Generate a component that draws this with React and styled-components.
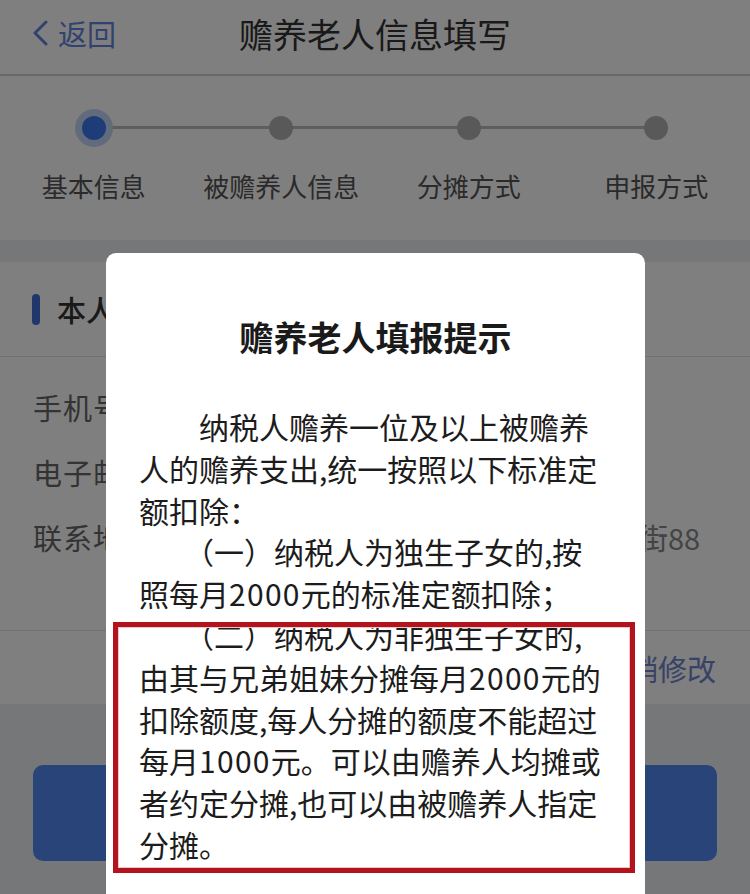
import React from "react";
import styled, { createGlobalStyle } from "styled-components";

const steps = ["基本信息", "被赡养人信息", "分摊方式", "申报方式"];

const rows = [
    { label: "手机号码", value: "138****6688" },
    { label: "电子邮箱", value: "zhang@163.com" },
    { label: "联系地址", value: "北京市海淀区中关村大街科学院南街88" },
];

// each entry is one printed line of the notice
const noticeLines = [
    "　　纳税人赡养一位及以上被赡养",
    "人的赡养支出,统一按照以下标准定",
    "额扣除：",
    "　　（一）纳税人为独生子女的,按",
    ["照每月", "2000", "元的标准定额扣除；"],
    "　　（二）纳税人为非独生子女的,",
    ["由其与兄弟姐妹分摊每月", "2000", "元的"],
    "扣除额度,每人分摊的额度不能超过",
    ["每月", "1000", "元。可以由赡养人均摊或"],
    "者约定分摊,也可以由被赡养人指定",
    "分摊。",
];

const App = () => {
    return (
        <Page>
            <GlobalStyle />
            <Header>
                <BackButton>
                    <svg width="20" height="26" viewBox="0 0 20 26">
                        <path
                            d="M16 2 L5 13 L16 24"
                            fill="none"
                            stroke="currentColor"
                            strokeWidth="3"
                            strokeLinecap="round"
                            strokeLinejoin="round"
                        />
                    </svg>
                    返回
                </BackButton>
                <HeaderTitle>赡养老人信息填写</HeaderTitle>
                <span />
            </Header>

            <Stepper>
                {steps.map((s, i) => (
                    <Step key={s} $last={i === steps.length - 1}>
                        <DotWrap>
                            <Dot $active={i === 0} />
                        </DotWrap>
                        <StepLabel>{s}</StepLabel>
                    </Step>
                ))}
            </Stepper>

            <Card>
                <SectionHead>
                    <Bar />
                    本人信息
                </SectionHead>
                <Rows>
                    {rows.map((r) => (
                        <Row key={r.label}>
                            <Label>{r.label}</Label>
                            <Value>{r.value}</Value>
                        </Row>
                    ))}
                </Rows>
                <Actions>
                    <LinkText>撤销修改</LinkText>
                </Actions>
            </Card>

            <NextButton>下一步</NextButton>

            <Overlay />
            <Modal>
                <ModalTitle>赡养老人填报提示</ModalTitle>
                <ModalBody>
                    {noticeLines.map((line, i) => (
                        <Line key={i}>
                            {Array.isArray(line) ? (
                                <>
                                    {line[0]}
                                    <Num>{line[1]}</Num>
                                    {line[2]}
                                </>
                            ) : (
                                line
                            )}
                        </Line>
                    ))}
                </ModalBody>
                <Highlight />
            </Modal>
        </Page>
    );
};

const GlobalStyle = createGlobalStyle`
    html, body {
        margin: 0;
        padding: 0;
    }
    body {
        font-family: "Noto Sans CJK SC", "Noto Sans", sans-serif;
        background: #eef0f3;
    }
`;

const Page = styled.div`
    position: relative;
    width: 750px;
    height: 894px;
    overflow: hidden;
    background: #eceef1;
`;

const Header = styled.header`
    height: 76px;
    padding-bottom: 8px;
    display: grid;
    grid-template-columns: 1fr auto 1fr;
    align-items: center;
    background: #fff;
    border-bottom: 2px solid #d0d0d0;
    box-sizing: border-box;
`;

const BackButton = styled.div`
    display: flex;
    align-items: center;
    gap: 8px;
    padding-left: 30px;
    color: #6585e0;
    font-size: 29px;
    line-height: 1;
`;

const HeaderTitle = styled.h1`
    margin: 0;
    font-size: 34px;
    font-weight: 400;
    color: #333;
`;

const Stepper = styled.div`
    display: grid;
    grid-template-columns: repeat(4, 1fr);
    padding: 33px 0 36px;
    background: #fff;
`;

const Step = styled.div`
    position: relative;
    display: flex;
    flex-direction: column;
    align-items: center;

    &::after {
        content: "";
        display: ${(p) => (p.$last ? "none" : "block")};
        position: absolute;
        top: 17px;
        left: 50%;
        width: 100%;
        height: 3px;
        background: #bcbcbc;
    }
`;

const DotWrap = styled.div`
    position: relative;
    z-index: 1;
    width: 38px;
    height: 38px;
    display: flex;
    align-items: center;
    justify-content: center;
`;

const Dot = styled.div`
    width: 24px;
    height: 24px;
    border-radius: 50%;
    background: ${(p) => (p.$active ? "#3d7bf0" : "#b3b3b3")};
    box-shadow: ${(p) => (p.$active ? "0 0 0 7px #c4d6f8" : "none")};
`;

const StepLabel = styled.div`
    margin-top: 21px;
    font-size: 26px;
    line-height: 36px;
    color: #555;
    white-space: nowrap;
`;

const Card = styled.section`
    margin-top: 22px;
    background: #fff;
`;

const SectionHead = styled.div`
    height: 95px;
    display: flex;
    align-items: center;
    padding-left: 32px;
    font-size: 29px;
    font-weight: 500;
    color: #333;
    border-bottom: 1px solid #e2e2e2;
    box-sizing: border-box;
`;

const Bar = styled.span`
    width: 8px;
    height: 31px;
    border-radius: 4px;
    background: #3e6ed6;
    margin-right: 17px;
`;

const Rows = styled.div`
    padding: 17px 0 61px 33px;
`;

const Row = styled.div`
    display: flex;
    align-items: center;
    height: 65px;
`;

const Label = styled.div`
    width: 171px;
    flex-shrink: 0;
    font-size: 29px;
    color: #666;
    letter-spacing: 1px;
`;

const Value = styled.div`
    font-size: 29px;
    color: #888;
    white-space: nowrap;
`;

const Actions = styled.div`
    height: 74px;
    display: flex;
    align-items: center;
    justify-content: flex-end;
    padding-right: 34px;
    border-top: 1px solid #e2e2e2;
    box-sizing: border-box;
`;

const LinkText = styled.span`
    font-size: 29px;
    color: #6f84cc;
`;

const NextButton = styled.button`
    display: block;
    width: 684px;
    height: 96px;
    margin: 61px auto 0;
    border: none;
    border-radius: 10px;
    background: #5088f0;
    color: #fff;
    font-family: inherit;
    font-size: 32px;
`;

const Overlay = styled.div`
    position: absolute;
    inset: 0;
    z-index: 10;
    background: rgba(0, 0, 0, 0.5);
`;

const Modal = styled.div`
    position: absolute;
    z-index: 11;
    left: 106px;
    top: 253px;
    width: 539px;
    height: 680px;
    padding-top: 60px;
    box-sizing: border-box;
    background: #fff;
    border-radius: 10px;
`;

const ModalTitle = styled.h2`
    margin: 0;
    text-align: center;
    font-size: 34px;
    line-height: 48px;
    font-weight: 700;
    color: #1a1a1a;
`;

const ModalBody = styled.div`
    margin-top: 45px;
    padding: 0 42px 0 33px;
    font-size: 30px;
    line-height: 41.8px;
    color: #1c1c1c;
`;

const Line = styled.div`
    white-space: nowrap;
`;

const Num = styled.span`
    letter-spacing: 1.3px;
`;

const Highlight = styled.div`
    position: absolute;
    left: 7px;
    top: 369px;
    width: 522px;
    height: 251px;
    box-sizing: border-box;
    border: 5px solid #b3131c;
    box-shadow: inset 0 0 0 1px #efc4c6;
    pointer-events: none;
`;

export default App;
